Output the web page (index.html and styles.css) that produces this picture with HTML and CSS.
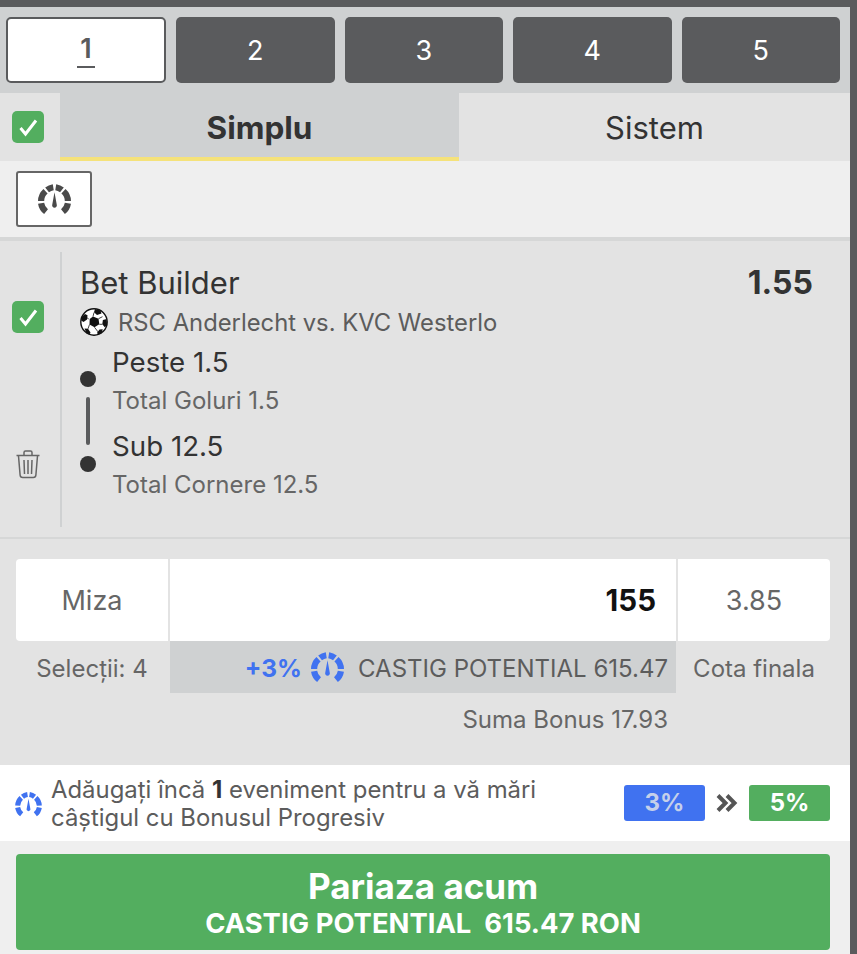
FILE: index.html
```html
<!DOCTYPE html>
<html lang="ro">
<head>
    <meta charset="UTF-8">
    <meta name="viewport" content="width=device-width, initial-scale=1.0">
    <title>Bilet</title>
    <link rel="stylesheet" href="styles.css">
</head>
<body>
    <svg class="defs" width="0" height="0" aria-hidden="true">
        <symbol id="gauge" viewBox="0 0 32 30">
            <g fill="none" stroke="currentColor" stroke-width="6">
                <path d="M7.800 26.800A13 13 0 0 1 3 18.600"/>
                <path d="M3 16.400A13 13 0 0 1 7.300 7"/>
                <path d="M8.800 5.700A13 13 0 0 1 14.800 3.100"/>
                <path d="M17.200 3.100A13 13 0 0 1 23.200 5.700"/>
                <path d="M24.700 7A13 13 0 0 1 29 16.400"/>
                <path d="M29 18.600A13 13 0 0 1 24.200 26.800"/>
            </g>
            <path fill="currentColor" d="M16 8 18.200 20a2.300 2.300 0 1 1-4.400 0z"/>
        </symbol>
        <symbol id="check" viewBox="0 0 32 32">
            <path fill="none" stroke="currentColor" stroke-width="3" d="M8.500 17l5 6L24 9.500"/>
        </symbol>
    </svg>

    <div class="slip">
        <div class="tabs">
            <button class="tab active"><span>1</span></button>
            <button class="tab">2</button>
            <button class="tab">3</button>
            <button class="tab">4</button>
            <button class="tab">5</button>
        </div>

        <div class="modes">
            <div class="mode-check">
                <span class="checkbox"><svg><use href="#check"/></svg></span>
            </div>
            <div class="mode selected">Simplu</div>
            <div class="mode">Sistem</div>
        </div>

        <div class="toolbar">
            <button class="gauge-btn"><svg><use href="#gauge"/></svg></button>
        </div>

        <div class="bet">
            <div class="bet-side">
                <span class="checkbox"><svg><use href="#check"/></svg></span>
                <svg class="trash" viewBox="0 0 26 30" fill="none" stroke="#666" stroke-width="1.500">
                    <path d="M1.500 6.500h23M9 6V3.500Q9 2 10.500 2h5Q17 2 17 3.500V6"/>
                    <path d="M3.500 7l1.600 19q.2 2.500 2.600 2.500h10.600q2.400 0 2.600-2.500L22.500 7"/>
                    <path d="M9 11l.5 14M13 11v14M17 11l-.5 14"/>
                </svg>
            </div>
            <div class="bet-main">
                <div class="bet-head">
                    <div class="bet-title">Bet Builder</div>
                    <div class="bet-odd">1.55</div>
                </div>
                <div class="bet-event">
                    <svg class="ball" viewBox="0 0 28 28">
                        <circle cx="14" cy="14" r="13.200" fill="#fff" stroke="#111" stroke-width="1.400"/>
                        <g fill="#111">
                            <path d="M13 8.500l5.500 2.200.8 5.600-4.800 3-5-2.800.2-5.600z"/>
                            <path d="M15 1l5.500 1.500 1 3-4.500 1.500-3-2.800z"/>
                            <path d="M1.500 9l3.500-3 2.500 1.200-.4 4.300L3.500 14l-2.300-1.500z"/>
                            <path d="M26.700 11l.4 6-2.300 2.200-2.500-3 .6-4.200z"/>
                            <path d="M4.500 20.500l3.500.3 2.500 3.700-1 2-3-1.300z"/>
                            <path d="M19.500 21.500l3.300-.3-1.300 4-3.800 1.600-.5-2.200z"/>
                        </g>
                        <g fill="none" stroke="#111" stroke-width=".8">
                            <path d="M13 8.500l1-4M18.500 10.700l4-2M19.300 16.300l3 0M14.500 19.300l3.500 4.500M9.500 16.500l-1.500 4.300M8.700 10.900l-1.600-1"/>
                        </g>
                    </svg>
                    <span>RSC Anderlecht vs. KVC Westerlo</span>
                </div>
                <div class="legs">
                    <div class="timeline">
                        <span class="dot"></span>
                        <span class="line"></span>
                        <span class="dot"></span>
                    </div>
                    <div class="leg-list">
                        <div class="leg">
                            <div class="leg-name">Peste 1.5</div>
                            <div class="leg-market">Total Goluri 1.5</div>
                        </div>
                        <div class="leg">
                            <div class="leg-name">Sub 12.5</div>
                            <div class="leg-market">Total Cornere 12.5</div>
                        </div>
                    </div>
                </div>
            </div>
        </div>

        <div class="stake">
            <div class="stake-row">
                <div class="stake-label">Miza</div>
                <div class="stake-input">155</div>
                <div class="stake-odd">3.85</div>
            </div>
            <div class="info-row">
                <div class="info-side">Selecții: 4</div>
                <div class="info-win">
                    <span class="plus">+3%</span>
                    <svg class="gauge-blue"><use href="#gauge"/></svg>
                    <span class="win-text">CASTIG POTENTIAL 615.47</span>
                </div>
                <div class="info-side">Cota finala</div>
            </div>
            <div class="bonus">Suma Bonus 17.93</div>
        </div>

        <div class="promo">
            <svg class="gauge-small"><use href="#gauge"/></svg>
            <p>Adăugați încă <b>1</b> eveniment pentru a vă mări<br>câștigul cu Bonusul Progresiv</p>
            <div class="levels">
                <span class="level blue">3%</span>
                <svg class="arrows" viewBox="0 0 22 20" fill="none" stroke="#555" stroke-width="4">
                    <path d="M2 2.500l7.500 7.500L2 17.500M11 2.500l7.500 7.500-7.500 7.500"/>
                </svg>
                <span class="level green">5%</span>
            </div>
        </div>

        <div class="place">
            <button class="place-btn">
                <span class="place-title">Pariaza acum</span>
                <span class="place-sub">CASTIG POTENTIAL&nbsp; 615.47 RON</span>
            </button>
        </div>
    </div>
</body>
</html>
```

FILE: styles.css
```css
/* General page */
body {
    margin: 0;
    background: #5a5b5d;
    font-family: Inter, "Liberation Sans", sans-serif;
    color: #333;
    height: 954px;
    overflow: hidden;
}
button {
    font-family: inherit;
    cursor: pointer;
}
.defs {
    position: absolute;
}
.slip {
    width: 850px;
    padding-top: 7px;
}
/* Numbered tabs */
.tabs {
    display: flex;
    gap: 10px;
    height: 86px;
    box-sizing: border-box;
    padding: 10px 10px 10px 6px;
    background: #cfd1d2;
}
.tab {
    flex: 1 1 0;
    min-width: 0;
    border: none;
    border-radius: 5px;
    background: #5a5b5d;
    color: #fff;
    font-size: 27px;
    padding: 0;
}
.tab.active {
    flex: 0 0 160px;
    background: #fff;
    border: 2px solid #5a5b5d;
    color: #5a5b5d;
}
.tab.active span {
    display: inline-block;
    border-bottom: 2px solid #5a5b5d;
    padding: 0 3px 1px;
    font-weight: 600;
}
/* Simplu / Sistem */
.modes {
    display: flex;
    height: 68px;
    background: #e3e3e3;
}
.mode-check {
    width: 60px;
    display: flex;
    align-items: center;
    padding-left: 12px;
    box-sizing: border-box;
}
.checkbox {
    display: block;
    width: 32px;
    height: 32px;
    border-radius: 5px;
    background: #53ae5f;
    color: #fff;
}
.checkbox svg {
    display: block;
    width: 32px;
    height: 32px;
}
.mode {
    display: flex;
    align-items: center;
    justify-content: center;
    box-sizing: border-box;
    width: 391px;
    font-size: 31px;
}
.mode.selected {
    width: 399px;
    background: #cfd1d2;
    border-bottom: 4px solid #f5e27a;
    padding-top: 4px;
    font-size: 31.500px;
    font-weight: 700;
}
/* Toolbar */
.toolbar {
    height: 76px;
    box-sizing: border-box;
    padding: 10px 16px;
    background: #efefef;
}
.gauge-btn {
    display: flex;
    align-items: center;
    justify-content: center;
    width: 76px;
    height: 56px;
    padding: 0;
    background: #fff;
    border: 2px solid #666;
    border-radius: 3px;
    color: #4a4a4a;
}
.gauge-btn svg {
    width: 33px;
    height: 31px;
}
/* Bet row */
.bet {
    display: flex;
    height: 302px;
    box-sizing: border-box;
    padding: 11px 0 10px;
    background: #e3e3e3;
    border-top: 4px solid #d6d7d7;
    border-bottom: 2px solid #d6d7d7;
}
.bet-side {
    width: 62px;
    box-sizing: border-box;
    padding: 49px 0 0 12px;
    border-right: 2px solid #cfd1d2;
}
.trash {
    display: block;
    width: 26px;
    height: 30px;
    margin: 116px 0 0 3px;
}
.bet-main {
    flex: 1;
    padding-left: 18px;
}
.bet-head {
    display: flex;
    justify-content: space-between;
    padding: 13px 37px 0 0;
    line-height: 36px;
}
.bet-title {
    font-size: 31px;
}
.bet-odd {
    font-size: 32px;
    font-weight: 700;
}
.bet-event {
    display: flex;
    align-items: center;
    gap: 10px;
    height: 34px;
    margin-top: 4px;
    font-size: 23.800px;
    color: #5c5c5c;
}
.ball {
    width: 28px;
    height: 28px;
}
.legs {
    display: flex;
    margin-top: 3px;
}
.timeline {
    display: flex;
    flex-direction: column;
    align-items: center;
    flex: none;
    width: 16px;
    padding-top: 29px;
}
.dot {
    width: 16px;
    height: 16px;
    border-radius: 50%;
    background: #333;
}
.line {
    width: 4px;
    height: 48px;
    margin: 10px 0 11px;
    background: #5a5b5d;
    border-radius: 2px;
}
.leg-list {
    margin-left: 16px;
}
.leg {
    height: 84px;
}
.leg-name {
    font-size: 27.700px;
    line-height: 40px;
}
.leg-market {
    font-size: 24px;
    line-height: 38px;
    color: #666;
}
/* Stake */
.stake {
    height: 226px;
    box-sizing: border-box;
    padding: 20px 20px 0 16px;
    background: #e3e3e3;
}
.stake-row {
    display: flex;
    height: 82px;
    gap: 2px;
}
.stake-row > div {
    display: flex;
    align-items: center;
    justify-content: center;
    background: #fff;
    font-size: 27px;
    color: #666;
}
.stake-label {
    width: 152px;
    border-radius: 4px 0 0 4px;
}
.stake-row .stake-input {
    flex: 1;
    justify-content: flex-end;
    padding-right: 20px;
    font-size: 29.500px;
    font-weight: 700;
    color: #111;
}
.stake-odd {
    width: 152px;
    border-radius: 0 4px 4px 0;
}
.info-row {
    display: flex;
    height: 52px;
    gap: 2px;
}
.info-side {
    width: 152px;
    display: flex;
    align-items: center;
    justify-content: center;
    padding-top: 2px;
    box-sizing: border-box;
    font-size: 24px;
    color: #666;
}
.info-win {
    flex: 1;
    display: flex;
    align-items: center;
    justify-content: flex-end;
    padding: 2px 8px 0 0;
    background: #cfd1d2;
    font-size: 24px;
    color: #5c5c5c;
}
.plus {
    color: #4072f0;
    font-size: 24.500px;
    font-weight: 700;
}
.gauge-blue {
    width: 33px;
    height: 31px;
    margin: -2px 14px 0 9px;
    color: #4072f0;
}
.bonus {
    margin-top: 13px;
    padding-right: 162px;
    text-align: right;
    font-size: 24px;
    line-height: 28px;
    color: #666;
}
/* Progressive bonus */
.promo {
    display: flex;
    align-items: center;
    height: 76px;
    box-sizing: border-box;
    padding: 0 20px 0 15px;
    background: #fff;
}
.gauge-small {
    flex: none;
    width: 27px;
    height: 25px;
    margin-top: 2px;
    color: #4072f0;
}
.promo p {
    flex: 1;
    margin: 2px 0 0 9px;
    font-size: 23.900px;
    line-height: 28px;
    color: #5c5c5c;
}
.promo b {
    color: #333;
}
.levels {
    display: flex;
    align-items: center;
}
.level {
    width: 81px;
    height: 36px;
    line-height: 36px;
    text-align: center;
    border-radius: 3px;
    font-size: 24px;
    font-weight: 700;
}
.level.blue {
    background: #4072f0;
    color: #c5d0ea;
}
.level.green {
    background: #53ae5f;
    color: #fff;
}
.arrows {
    width: 22px;
    height: 20px;
    margin: 0 11px;
}
/* Place bet */
.place {
    height: 113px;
    box-sizing: border-box;
    padding: 13px 20px 0 16px;
    background: #efefef;
}
.place-btn {
    display: flex;
    flex-direction: column;
    align-items: center;
    justify-content: center;
    width: 100%;
    height: 96px;
    padding: 2px 0 0;
    border: none;
    border-radius: 4px;
    background: #53ae5f;
    color: #fff;
    font-weight: 700;
}
.place-title {
    font-size: 35px;
    line-height: 40px;
}
.place-sub {
    font-size: 27.400px;
    line-height: 34px;
}
```
